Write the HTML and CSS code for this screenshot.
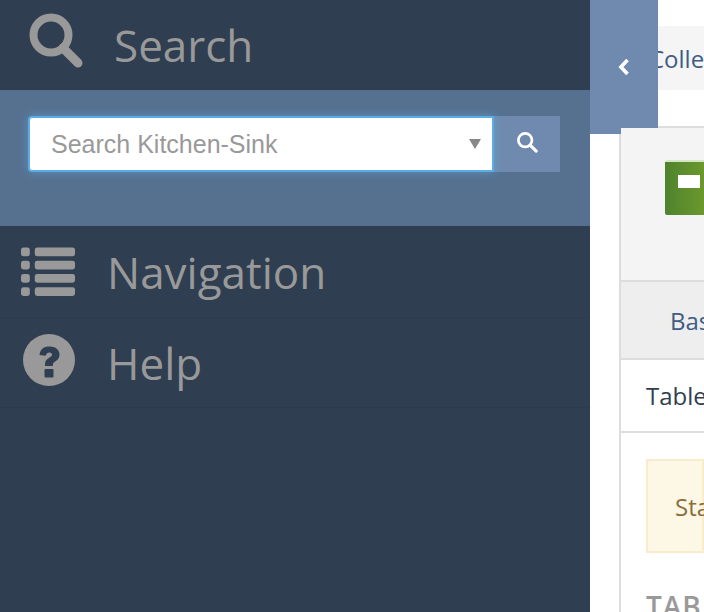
FILE: index.html
```html
<!DOCTYPE html>
<html lang="en">
<head>
  <meta charset="UTF-8">
  <title>Kitchen-Sink</title>
  <link rel="stylesheet" href="styles.css">
</head>
<body>
  <div class="page">
    <div class="sidebar">
      <div class="side-item side-search">
        <svg class="side-icon icon-search" viewBox="0 0 56 56"><circle cx="23" cy="23" r="17.5" fill="none" stroke="#999" stroke-width="8"/><path d="M35 36 L50 51" stroke="#999" stroke-width="9" stroke-linecap="round"/></svg>
        <span class="side-label">Search</span>
      </div>
      <div class="search-panel">
        <div class="search-group">
          <div class="search-input">
            <span class="placeholder">Search Kitchen-Sink</span>
            <span class="caret"></span>
          </div>
          <div class="search-btn">
            <svg viewBox="0 0 24 24" width="22" height="22"><circle cx="10" cy="10" r="7.4" fill="none" stroke="#fff" stroke-width="3"/><path d="M15.5 15.5 L22 22" stroke="#fff" stroke-width="3.4" stroke-linecap="round"/></svg>
          </div>
        </div>
      </div>
      <div class="side-item side-nav">
        <svg class="side-icon icon-list" viewBox="0 0 56 50"><g fill="#999"><rect x="0" y="0" width="9" height="9" rx="2.5"/><rect x="14" y="0" width="41" height="9" rx="2.5"/><rect x="0" y="13.5" width="9" height="9" rx="2.5"/><rect x="14" y="13.5" width="41" height="9" rx="2.5"/><rect x="0" y="27" width="9" height="9" rx="2.5"/><rect x="14" y="27" width="41" height="9" rx="2.5"/><rect x="0" y="40.5" width="9" height="9" rx="2.5"/><rect x="14" y="40.5" width="41" height="9" rx="2.5"/></g></svg>
        <span class="side-label">Navigation</span>
      </div>
      <div class="side-item side-help">
        <svg class="side-icon icon-help" viewBox="0 0 52 52"><circle cx="26" cy="26" r="26" fill="#999"/><path d="M16.5 21 C17 15 21 12.5 26.500 12.500 C32.500 12.500 36.500 16 36.500 20.500 C36.500 25 33.500 26.500 31.500 28 C30 29 29.800 30 29.800 32 L22 32 C22 28 22.500 26 25.500 24.200 C27.500 23 29 22.300 29 20.800 C29 19.300 27.800 18.500 26.300 18.500 C24.500 18.500 23.300 19.700 22.600 21.800 Z" fill="#2f3e50"/><rect x="21.500" y="35" width="9" height="8.500" rx="1" fill="#2f3e50"/></svg>
        <span class="side-label">Help</span>
      </div>
    </div>

    <button class="toggle">
      <svg viewBox="0 0 16 22" width="14" height="20"><path d="M12 3 L4.500 11 L12 19" fill="none" stroke="#fff" stroke-width="4.200"/></svg>
    </button>

    <div class="content">
      <div class="breadcrumb"><span>Collections</span></div>
      <div class="box">
        <div class="box-head">
          <div class="book"><span class="book-label"></span></div>
        </div>
        <div class="tabs"><span>Basic</span></div>
        <div class="table-row">Table</div>
        <div class="box-body">
          <div class="alert">Status</div>
          <h3 class="box-title">TABLE</h3>
        </div>
      </div>
    </div>
  </div>
</body>
</html>
```

FILE: styles.css
```css
html, body { margin: 0; padding: 0; height: 100%; overflow: hidden; }
body { font-family: "Open Sans", sans-serif; background: #fff; }
.page { display: flex; height: 612px; width: 704px; overflow: hidden; position: relative; }

.sidebar { flex: 0 0 590px; background: #2f3e50; }
.side-item { display: flex; align-items: center; color: #999; box-sizing: border-box; }
.side-label { font-size: 44px; line-height: 1; letter-spacing: 0; }
.side-search { height: 90px; padding-left: 28px; }
.side-search .side-label { margin-left: 30px; }
.icon-search { width: 56px; height: 56px; margin-top: -10px; }
.side-nav { height: 92px; padding-left: 21px; border-bottom: 1px solid #2c3b4c; }
.side-nav .side-label { margin-left: 31px; }
.icon-list { width: 55px; height: 50px; }
.side-help { height: 90px; padding-left: 23px; border-bottom: 1px solid #2c3b4c; }
.side-help .side-label { margin-left: 32px; }
.icon-help { width: 52px; height: 52px; margin-top: -6px; }

.search-panel { height: 136px; background: #567190; padding: 26px 30px 0 28px; box-sizing: border-box; }
.search-group { display: flex; height: 56px; }
.search-input {
  flex: 1;
  display: flex;
  align-items: center;
  justify-content: space-between;
  background: #fff;
  border: 2px solid #5dade2;
  border-radius: 4px 0 0 4px;
  box-shadow: 0 0 10px rgba(93, 173, 226, 0.6);
  padding: 0 11px 0 21px;
  position: relative;
}
.placeholder { font-family: "Liberation Sans", Arial, sans-serif; font-size: 25px; color: #999; }
.caret { width: 0; height: 0; border-left: 6px solid transparent; border-right: 6px solid transparent; border-top: 10px solid #888; }
.search-btn { flex: 0 0 66px; display: flex; align-items: center; justify-content: center; background: #6f8aae; padding-bottom: 4px; box-sizing: border-box; }

.toggle {
  position: absolute;
  left: 590px;
  top: 0;
  width: 68px;
  height: 134px;
  border: none;
  padding: 0;
  background: #6f8aae;
  display: flex;
  align-items: center;
  justify-content: center;
}

.content { flex: 1; min-width: 0; overflow: hidden; }
.breadcrumb { margin-top: 26px; height: 64px; background: #f5f5f5; display: flex; align-items: center; padding-left: 59px; color: #3f5c85; font-size: 24px; white-space: nowrap; }
.box { margin: 36px 0 0 29px; border-top: 2px solid #ddd; border-left: 2px solid #ddd; white-space: nowrap; }
.box-head { height: 152px; background: #f4f4f4; position: relative; padding: 32px 0 0 44px; box-sizing: border-box; }
.book { width: 60px; height: 55px; background: linear-gradient(to right, #4f822e, #7aa52c); border-top: 2px solid #d8e6c8; border-radius: 2px; padding: 13px 0 0 13px; box-sizing: border-box; }
.book-label { display: block; width: 22px; height: 13px; background: #fff; }
.tabs { height: 76px; background: #eee; border-top: 2px solid #ddd; border-bottom: 2px solid #ddd; padding-left: 49px; display: flex; align-items: center; color: #3f5c85; font-size: 24px; }
.table-row { height: 73px; box-sizing: border-box; border-bottom: 2px solid #ddd; padding-left: 25px; display: flex; align-items: center; color: #2f3e50; font-size: 24px; }
.box-body { padding: 26px 0 0 25px; }
.alert { height: 94px; box-sizing: border-box; background: #fdf7e5; border: 2px solid #faebcc; padding-left: 27px; display: flex; align-items: center; color: #8a6d3b; font-size: 24px; }
.box-title { margin: 34px 0 0; font-size: 28px; font-weight: 600; color: #999; letter-spacing: 1px; }
```
